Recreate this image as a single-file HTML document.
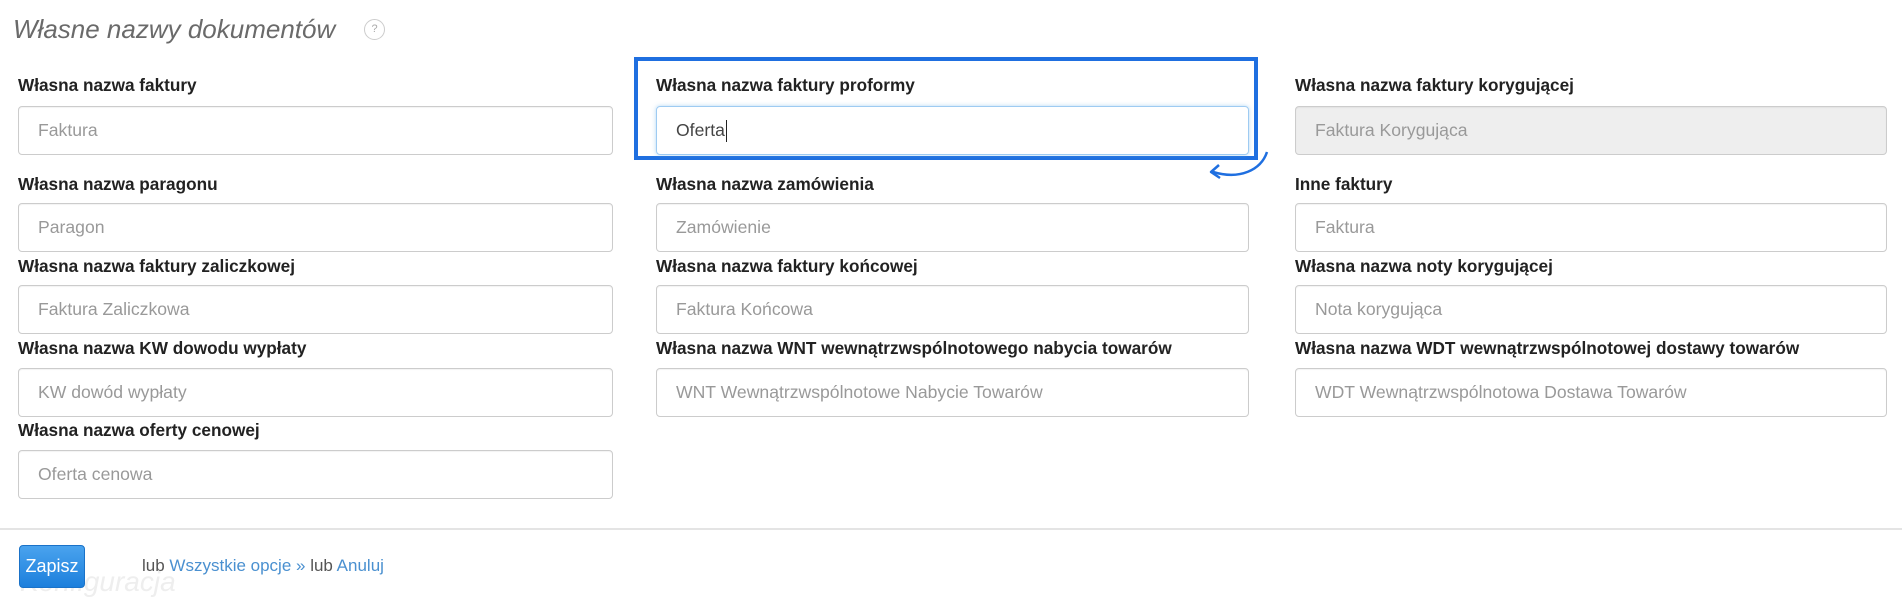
<!DOCTYPE html>
<html><head><meta charset="utf-8"><style>
*{box-sizing:border-box;margin:0;padding:0}
body{width:1902px;height:600px;background:#fff;font-family:"Liberation Sans",Arial,sans-serif;position:relative;overflow:hidden}
.t{position:absolute;left:13px;top:14px;font-size:26px;font-style:italic;color:#6a6a6a}
.q{position:absolute;left:364px;top:19px;width:21px;height:21px;border:1px solid #ccc;border-radius:50%;font-size:11px;color:#aaa;text-align:center;line-height:19px}
.l{position:absolute;font-size:17.2px;font-weight:bold;color:#222;white-space:nowrap}
.i{position:absolute;height:49px;border:1px solid #ccc;border-radius:4px;font-size:17.6px;color:#999;padding-left:19px;line-height:47px;white-space:nowrap;box-shadow:inset 0 1px 1px rgba(0,0,0,.05)}
.c1{left:18px;width:595px}.c2{left:656px;width:593px}.c3{left:1295px;width:592px}
.hl{position:absolute;left:634px;top:57px;width:624px;height:103px;border:4px solid #1f6fe0}
.btn{position:absolute;left:19px;top:545px;width:66px;height:43px;border-radius:4px;background:linear-gradient(#4aa3ee,#1c7fdc);border:1px solid #1a72c8;color:#fff;font-size:18px;text-align:center;line-height:41px}
.f{position:absolute;left:142px;top:556px;font-size:17px;color:#555}
.f a{color:#4a90d0;text-decoration:none}
</style></head><body>
<div class="t">Własne nazwy dokumentów</div><div class="q">?</div>

<div class="l c1" style="top:75px">Własna nazwa faktury</div>
<div class="i c1" style="top:106px">Faktura</div>
<div class="hl"></div>
<div class="l c2" style="top:75px">Własna nazwa faktury proformy</div>
<div class="i c2" style="top:106px;border-color:#9ecbf2;color:#444;box-shadow:0 0 4px rgba(102,175,233,.5)">Oferta<span style="border-left:1.5px solid #222;margin-left:1px;height:22px;display:inline-block;vertical-align:middle"></span></div>
<div class="l c3" style="top:75px">Własna nazwa faktury korygującej</div>
<div class="i c3" style="top:106px;background:#eee">Faktura Korygująca</div>

<svg style="position:absolute;left:1195px;top:148px" width="80" height="40"><path d="M72 4 C66 22 45 32 18 24" fill="none" stroke="#1f6fe0" stroke-width="2.5"/><path d="M24 17 L16 24 L25 30" fill="none" stroke="#1f6fe0" stroke-width="2.5" stroke-linejoin="round"/></svg>

<div class="l c1" style="top:174px">Własna nazwa paragonu</div>
<div class="i c1" style="top:203px">Paragon</div>
<div class="l c2" style="top:174px">Własna nazwa zamówienia</div>
<div class="i c2" style="top:203px">Zamówienie</div>
<div class="l c3" style="top:174px">Inne faktury</div>
<div class="i c3" style="top:203px">Faktura</div>

<div class="l c1" style="top:256px">Własna nazwa faktury zaliczkowej</div>
<div class="i c1" style="top:285px">Faktura Zaliczkowa</div>
<div class="l c2" style="top:256px">Własna nazwa faktury końcowej</div>
<div class="i c2" style="top:285px">Faktura Końcowa</div>
<div class="l c3" style="top:256px">Własna nazwa noty korygującej</div>
<div class="i c3" style="top:285px">Nota korygująca</div>

<div class="l c1" style="top:338px">Własna nazwa KW dowodu wypłaty</div>
<div class="i c1" style="top:368px">KW dowód wypłaty</div>
<div class="l c2" style="top:338px">Własna nazwa WNT wewnątrzwspólnotowego nabycia towarów</div>
<div class="i c2" style="top:368px">WNT Wewnątrzwspólnotowe Nabycie Towarów</div>
<div class="l c3" style="top:338px">Własna nazwa WDT wewnątrzwspólnotowej dostawy towarów</div>
<div class="i c3" style="top:368px">WDT Wewnątrzwspólnotowa Dostawa Towarów</div>

<div class="l c1" style="top:420px">Własna nazwa oferty cenowej</div>
<div class="i c1" style="top:450px">Oferta cenowa</div>

<div style="position:absolute;left:0;top:528px;width:1902px;height:2px;background:#e4e4e4"></div>
<div style="position:absolute;left:20px;top:566px;font-size:28px;font-style:italic;color:#eee">Konfiguracja</div>
<div class="btn">Zapisz</div>
<div class="f">lub <a>Wszystkie opcje »</a> lub <a>Anuluj</a></div>
</body></html>
